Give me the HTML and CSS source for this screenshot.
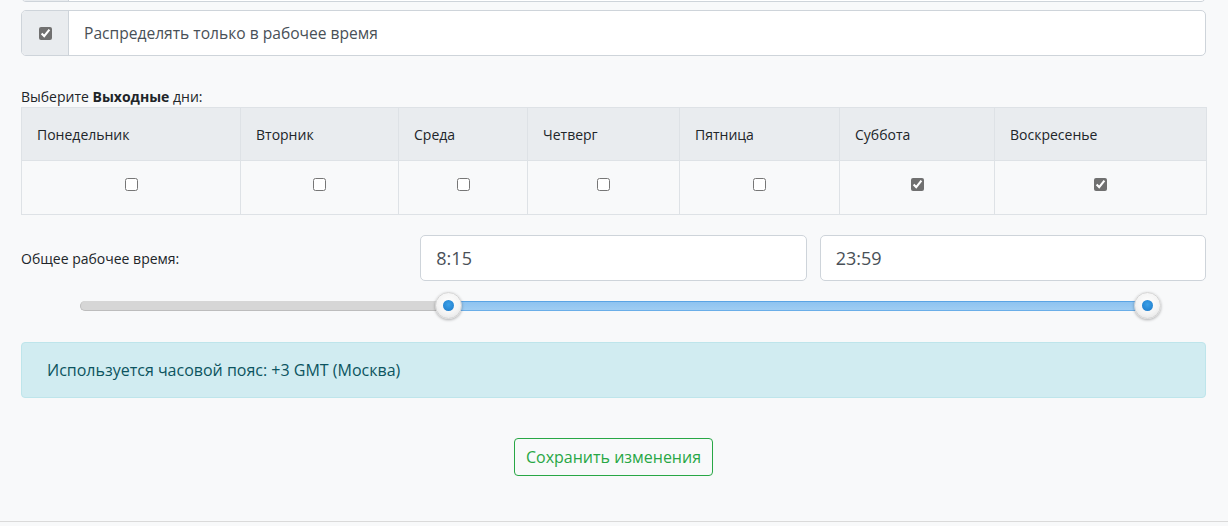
FILE: index.html
```html
<!DOCTYPE html>
<html lang="ru">
<head>
  <meta charset="UTF-8">
  <title>Рабочее время</title>
  <link rel="stylesheet" href="styles.css">
</head>
<body>
  <div class="page">
    <div class="input-group prev">
      <div class="addon"></div>
      <div class="field"></div>
    </div>

    <div class="input-group">
      <div class="addon"><input type="checkbox" checked></div>
      <div class="field">Распределять только в рабочее время</div>
    </div>

    <p class="caption">Выберите <strong>Выходные</strong> дни:</p>
    <table class="days">
      <thead>
        <tr>
          <th class="c1">Понедельник</th>
          <th class="c2">Вторник</th>
          <th class="c3">Среда</th>
          <th class="c4">Четверг</th>
          <th class="c5">Пятница</th>
          <th class="c6">Суббота</th>
          <th class="c7">Воскресенье</th>
        </tr>
      </thead>
      <tbody>
        <tr>
          <td><input type="checkbox"></td>
          <td><input type="checkbox"></td>
          <td><input type="checkbox"></td>
          <td><input type="checkbox"></td>
          <td><input type="checkbox"></td>
          <td><input type="checkbox" checked></td>
          <td><input type="checkbox" checked></td>
        </tr>
      </tbody>
    </table>

    <div class="time-row">
      <label class="time-label">Общее рабочее время:</label>
      <input class="time-input" type="text" value="8:15">
      <input class="time-input" type="text" value="23:59">
    </div>

    <div class="slider">
      <div class="track"></div>
      <div class="range">
        <div class="fill" style="left: 34.375%; right: 0.07%;"></div>
        <span class="handle" style="left: 34.375%;"></span>
        <span class="handle" style="left: 99.93%;"></span>
      </div>
    </div>

    <div class="alert">Используется часовой пояс: +3 GMT (Москва)</div>

    <div class="actions">
      <button class="btn-save">Сохранить изменения</button>
    </div>
  </div>
  <div class="footer"></div>
</body>
</html>
```

FILE: styles.css
```css
body {
  margin: 0;
  background: #f8f9fa;
  font-family: "Open Sans", "Noto Sans", sans-serif;
  color: #212529;
  overflow: hidden;
}

.page {
  padding: 0 22px 0 21px;
}

.input-group {
  display: flex;
  height: 46px;
  border: 1px solid #ced4da;
  border-radius: 5px;
  background: #fff;
  box-sizing: border-box;
  overflow: hidden;
}

.input-group.prev {
  margin-top: -44px;
  margin-bottom: 8px;
}

.addon {
  width: 46px;
  background: #e9ecef;
  border-right: 1px solid #ced4da;
  display: flex;
  align-items: center;
  justify-content: center;
}

.field {
  flex: 1;
  display: flex;
  align-items: center;
  padding-left: 15px;
  font-size: 15.6px;
  color: #495057;
}

input[type="checkbox"] {
  width: 13px;
  height: 13px;
  margin: 0;
  accent-color: #707070;
}

.caption {
  margin: 30px 0 0;
  font-size: 14px;
  line-height: 21px;
}

.days {
  width: 100%;
  border-collapse: collapse;
  table-layout: fixed;
  font-size: 14px;
}

.days th,
.days td {
  border: 1px solid #dee2e6;
  box-sizing: border-box;
}

.days th {
  height: 53px;
  background: #e9ecef;
  font-weight: normal;
  text-align: left;
  padding: 0 0 0 15px;
}

.days td {
  height: 54px;
  text-align: center;
  padding: 0 0 4px 0;
}

.c1 { width: 219px; }
.c2 { width: 158px; }
.c3 { width: 129px; }
.c4 { width: 152px; }
.c5 { width: 160px; }
.c6 { width: 155px; }
.c7 { width: 212px; }

.time-row {
  display: grid;
  grid-template-columns: 1fr 1fr 1fr;
  column-gap: 13px;
  align-items: center;
  margin-top: 20px;
}

.time-label {
  font-size: 14px;
}

.time-input {
  height: 46px;
  box-sizing: border-box;
  border: 1px solid #ced4da;
  border-radius: 5px;
  padding: 0 15px;
  font-family: inherit;
  font-size: 18px;
  color: #495057;
  background: #fff;
  min-width: 0;
}

.slider {
  position: relative;
  height: 27px;
  margin: 11px 54px 0 59px;
}

.track {
  position: absolute;
  left: 0;
  right: 0;
  top: 9px;
  height: 10px;
  box-sizing: border-box;
  border-radius: 5px;
  background: #d6d6d6;
  border: 1px solid #bdbdbd;
  border-width: 0 0 1px 1px;
}

.range {
  position: absolute;
  left: 2px;
  right: 4px;
  top: 0;
  bottom: 0;
}

.fill {
  position: absolute;
  top: 9px;
  height: 10px;
  box-sizing: border-box;
  border-top: 1px solid #5aa4e4;
  border-bottom: 1px solid #6aaee8;
  background: linear-gradient(#8ec3f0, #9fcdf3);
}

.handle {
  position: absolute;
  top: 0;
  width: 27px;
  height: 27px;
  margin-left: -13px;
  border-radius: 50%;
  box-sizing: border-box;
  border: 1px solid #d4d4d4;
  background: radial-gradient(circle at 50% 40%, #ffffff 0, #f4f4f4 55%, #dedede 100%);
  box-shadow: 0 1px 3px rgba(0, 0, 0, 0.3);
}

.handle::after {
  content: "";
  position: absolute;
  left: 7px;
  top: 7px;
  width: 11px;
  height: 11px;
  border-radius: 50%;
  background: radial-gradient(circle at 50% 40%, #3ba0e8, #1b78c8);
}

.alert {
  margin-top: 23px;
  height: 56px;
  box-sizing: border-box;
  display: flex;
  align-items: center;
  padding-left: 25px;
  background: #d1ecf1;
  border: 1px solid #bee5eb;
  border-radius: 4px;
  color: #0c5460;
  font-size: 16px;
}

.actions {
  display: flex;
  justify-content: center;
  margin-top: 40px;
}

.btn-save {
  height: 38px;
  padding: 0 11px;
  background: transparent;
  border: 1px solid #28a745;
  border-radius: 4px;
  color: #28a745;
  font-family: inherit;
  font-size: 16px;
}

.footer {
  margin-top: 45px;
  border-top: 1px solid #dadada;
  height: 10px;
}
```
